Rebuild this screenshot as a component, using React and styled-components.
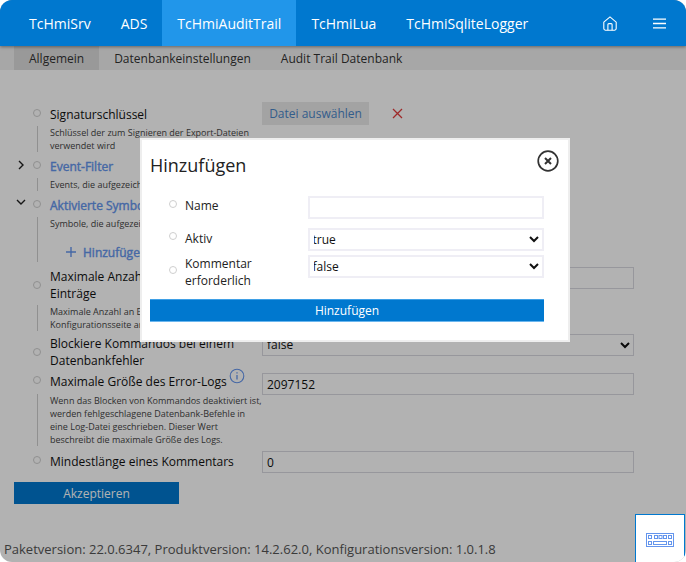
import React from "react";
import styled, { createGlobalStyle } from "styled-components";

const Global = createGlobalStyle`
  html, body { margin: 0; padding: 0; background: #fff; }
  body { font-family: "Open Sans", "Liberation Sans", sans-serif; }
  * { box-sizing: border-box; }
`;

const Frame = styled.div`
  position: relative;
  width: 686px;
  height: 562px;
  overflow: hidden;
  border-radius: 12px;
  background: #fff;
  display: flex;
  flex-direction: column;
`;

const TopBar = styled.header`
  position: relative;
  z-index: 3;
  flex: none;
  height: 46px;
  display: flex;
  align-items: stretch;
  padding-left: 14px;
  background: #0078cf;
  box-shadow: 0 1px 3px rgba(0, 0, 0, 0.4);
`;

const TopTab = styled.div`
  display: flex;
  align-items: center;
  padding: 0 15px;
  font-size: 14px;
  color: #fff;
  background: ${(p) => (p.$active ? "#2196ea" : "transparent")};
`;

const TopIcons = styled.div`
  margin-left: auto;
  display: flex;
  align-items: center;
  gap: 36px;
  padding-right: 20px;
`;

const SubTabs = styled.nav`
  flex: none;
  height: 24px;
  display: flex;
  padding-left: 14px;
  background: #f0f0f0;
`;

const SubTab = styled.div`
  display: flex;
  align-items: center;
  padding: 0 15px;
  font-size: 12px;
  color: #333;
  background: ${(p) => (p.$active ? "#dcdcdc" : "transparent")};
`;

const Settings = styled.main`
  flex: 1;
  display: flex;
  flex-direction: column;
  padding-top: 36px;
`;

const Row = styled.section`
  display: grid;
  grid-template-columns: 33px 17px 212px 372px;
  margin-top: ${(p) => p.$top || 0}px;
`;

const Twisty = styled.div`
  display: flex;
  justify-content: center;
  padding: ${(p) => p.$top || 0}px 0 0 9px;
`;

const Dot = styled.span`
  display: block;
  width: 8px;
  height: 8px;
  margin-top: ${(p) => p.$top || 3}px;
  border-radius: 50%;
  border: 1.5px solid #cfcfcf;
  background: #fff;
`;

const LabelColumn = styled.div`
  min-width: 0;
`;

const Label = styled.div`
  font-size: 12px;
  line-height: 17px;
  color: #111;
`;

const GroupLabel = styled.div`
  font-size: 12px;
  line-height: 17px;
  color: #6495ed;
  -webkit-text-stroke: 0.4px #6495ed;
  white-space: nowrap;
`;

const Note = styled.div`
  margin: ${(p) => p.$top || 3}px 0 0 -13px;
  padding-left: 12px;
  border-left: 1px solid #cfcfcf;
  font-size: 9px;
  line-height: 13px;
  color: #444;
  white-space: nowrap;
`;

const AddLine = styled.div`
  display: flex;
  align-items: center;
  gap: 6px;
  padding: 12px 0 0 15px;
  height: 32px;
  font-size: 12px;
  color: #6495ed;
  -webkit-text-stroke: 0.4px #6495ed;
`;

const FieldSlot = styled.div`
  margin-top: ${(p) => p.$top || 0}px;
`;

const FileButton = styled.div`
  width: 107px;
  height: 23px;
  display: flex;
  align-items: center;
  justify-content: center;
  font-size: 12px;
  color: #4a86c8;
  background: #eaeaea;
`;

const FileRow = styled.div`
  display: flex;
  align-items: center;
  gap: 23px;
`;

const TextField = styled.div`
  width: 372px;
  height: 22px;
  display: flex;
  align-items: center;
  padding-left: 4px;
  font-size: 12px;
  color: #111;
  border: 1px solid #d8d8e0;
`;

const SelectField = styled.select`
  width: ${(p) => p.$width || 372}px;
  height: ${(p) => p.$height || 22}px;
  padding-left: 0;
  font-family: inherit;
  font-size: 12px;
  color: #111;
  background: transparent;
  border: ${(p) => p.$border || "1px solid #d8d8e0"};
  border-radius: 0;
  outline: none;
`;

const AcceptButton = styled.div`
  width: 165px;
  height: 22px;
  margin: 9px 0 0 14px;
  display: flex;
  align-items: center;
  justify-content: center;
  font-size: 12px;
  color: #fff;
  background: #0078cf;
`;

const Footer = styled.footer`
  margin-top: auto;
  padding: 0 0 4px 4px;
  font-size: 13px;
  line-height: 18px;
  color: #555;
  white-space: nowrap;
`;

const Overlay = styled.div`
  position: absolute;
  z-index: 2;
  inset: 0;
  background: rgba(0, 0, 0, 0.3);
`;

const Dialog = styled.div`
  position: absolute;
  z-index: 4;
  left: 140px;
  top: 138px;
  width: 430px;
  height: 204px;
  padding: 10px 8px 0 8px;
  background: #fff;
  border: 2px solid #eeeeee;
`;

const DialogHead = styled.div`
  display: flex;
  justify-content: space-between;
  height: 46px;
`;

const DialogTitle = styled.h2`
  margin: 3px 0 0;
  font-size: 18px;
  line-height: 25px;
  font-weight: 400;
  color: #222;
`;

const DialogRow = styled.div`
  display: grid;
  grid-template-columns: 35px 123px 236px;
  height: ${(p) => p.$height}px;
`;

const DialogLabel = styled.div`
  font-size: 12px;
  line-height: 17px;
  padding-top: ${(p) => p.$top || 0}px;
  color: #222;
`;

const DialogDot = styled.span`
  display: block;
  width: 8px;
  height: 8px;
  margin: ${(p) => p.$top}px 0 0 19px;
  border-radius: 50%;
  border: 1.5px solid #cfcfcf;
`;

const DialogInput = styled.input`
  width: 236px;
  height: 23px;
  border: 2px solid #efeef5;
  outline: none;
  background: #fff;
`;

const DialogSelect = styled(SelectField)`
  text-indent: -1.5px;
`;

const DialogButton = styled.div`
  width: 394px;
  height: 23px;
  margin-top: 0;
  display: flex;
  align-items: center;
  justify-content: center;
  font-size: 12px;
  color: #fff;
  background: #0078cf;
  border-top: 1px solid #3fa0e6;
  border-bottom: 1px solid #6bb6ee;
`;

const KeyboardTab = styled.div`
  position: absolute;
  z-index: 3;
  right: 1px;
  bottom: 0;
  width: 50px;
  height: 48px;
  display: flex;
  align-items: center;
  justify-content: center;
  background: #fff;
  border: 1px solid #0078cf;
  border-bottom: 0;
  padding-top: 2px;
`;

const InfoBadge = styled.svg`
  position: absolute;
  left: 179px;
  top: -5px;
`;

const InfoLabel = styled.div`
  position: relative;
`;

const Chevron = ({ open }) => (
  <svg width="10" height="10" viewBox="0 0 10 10" fill="none" stroke="#222" strokeWidth="1.4">
    <path d={open ? "M1 3l4 4 4-4" : "M3 1l4 4-4 4"} />
  </svg>
);

const HomeIcon = () => (
  <svg width="14" height="15" viewBox="0 0 14 15" fill="none" stroke="#fff" strokeWidth="1.1">
    <path d="M0.8 6.2 L7 0.9 L13.2 6.2 V12.6 a1.6 1.6 0 0 1 -1.6 1.6 H2.4 a1.6 1.6 0 0 1 -1.6 -1.6 Z" />
    <path d="M4.9 14.2 V8.6 a1 1 0 0 1 1 -1 H8.1 a1 1 0 0 1 1 1 V14.2" />
  </svg>
);

const MenuIcon = () => (
  <svg width="13" height="11" viewBox="0 0 13 11" stroke="#fff" strokeWidth="1.3">
    <path d="M0 1.2H13M0 5.5H13M0 9.8H13" />
  </svg>
);

const CloseIcon = () => (
  <svg width="22" height="22" viewBox="0 0 22 22" fill="none" stroke="#333" style={{ marginRight: 1 }}>
    <circle cx="11" cy="11" r="9.8" strokeWidth="1.7" />
    <path d="M8 8l6 6M14 8l-6 6" strokeWidth="2" />
  </svg>
);

const RedCross = () => (
  <svg width="11" height="11" viewBox="0 0 11 11" stroke="#e23c3c" strokeWidth="1.3">
    <path d="M1 1l9 9M10 1l-9 9" />
  </svg>
);

const PlusIcon = () => (
  <svg width="12" height="12" viewBox="0 0 12 12" stroke="#6495ed" strokeWidth="1.4">
    <path d="M6 1v10M1 6h10" />
  </svg>
);

const InfoIcon = () => (
  <InfoBadge width="16" height="16" viewBox="0 0 16 16" fill="none" stroke="#6495ed" strokeWidth="1.1">
    <circle cx="8" cy="8" r="6.8" />
    <path d="M8 7v4.5M8 4.2v1.4" strokeWidth="1.3" />
  </InfoBadge>
);

const KeyboardIcon = () => (
  <svg width="28" height="14" viewBox="0 0 28 14" fill="none" stroke="#6495ed" strokeWidth="1">
    <rect x="0.5" y="0.5" width="27" height="13" />
    <rect x="2.5" y="2.5" width="3" height="3" />
    <rect x="8.5" y="2.5" width="3" height="3" />
    <rect x="13" y="2.5" width="3" height="3" />
    <rect x="17.5" y="2.5" width="3" height="3" />
    <rect x="22.5" y="2.5" width="3" height="3" />
    <rect x="2.5" y="8.5" width="3" height="3" />
    <rect x="7.5" y="8.5" width="13" height="3" />
    <rect x="22.5" y="8.5" width="3" height="3" />
  </svg>
);

export default function App() {
  return (
    <Frame>
      <Global />
      <TopBar>
        <TopTab>TcHmiSrv</TopTab>
        <TopTab>ADS</TopTab>
        <TopTab $active>TcHmiAuditTrail</TopTab>
        <TopTab>TcHmiLua</TopTab>
        <TopTab>TcHmiSqliteLogger</TopTab>
        <TopIcons>
          <HomeIcon />
          <MenuIcon />
        </TopIcons>
      </TopBar>
      <SubTabs>
        <SubTab $active>Allgemein</SubTab>
        <SubTab>Datenbankeinstellungen</SubTab>
        <SubTab>Audit Trail Datenbank</SubTab>
      </SubTabs>
      <Settings>
        <Row>
          <span />
          <Dot />
          <LabelColumn>
            <Label>Signaturschlüssel</Label>
            <Note>Schlüssel der zum Signieren der Export-Dateien<br />verwendet wird</Note>
          </LabelColumn>
          <FieldSlot $top={-4}>
            <FileRow>
              <FileButton>Datei auswählen</FileButton>
              <RedCross />
            </FileRow>
          </FieldSlot>
        </Row>
        <Row $top={6}>
          <Twisty $top={2}><Chevron /></Twisty>
          <Dot />
          <LabelColumn>
            <GroupLabel>Event-Filter</GroupLabel>
            <Note>Events, die aufgezeichnet werden</Note>
          </LabelColumn>
        </Row>
        <Row $top={6}>
          <Twisty><Chevron open /></Twisty>
          <Dot />
          <LabelColumn>
            <GroupLabel>Aktivierte Symbole</GroupLabel>
            <Note>
              Symbole, die aufgezeichnet werden
              <AddLine><PlusIcon />Hinzufügen</AddLine>
            </Note>
          </LabelColumn>
        </Row>
        <Row $top={6}>
          <span />
          <Dot $top={13} />
          <LabelColumn>
            <Label>Maximale Anzahl der Datenbank Einträge</Label>
            <Note>Maximale Anzahl an Einträgen, die auf der<br />Konfigurationsseite angezeigt werden</Note>
          </LabelColumn>
          <FieldSlot $top={-1}><TextField /></FieldSlot>
        </Row>
        <Row $top={4}>
          <span />
          <Dot $top={13} />
          <LabelColumn>
            <Label>Blockiere Kommandos bei einem Datenbankfehler</Label>
          </LabelColumn>
          <FieldSlot $top={-3}><SelectField defaultValue="false"><option>false</option><option>true</option></SelectField></FieldSlot>
        </Row>
        <Row $top={4}>
          <span />
          <Dot />
          <LabelColumn>
            <InfoLabel>
              <Label>Maximale Größe des Error-Logs</Label>
              <InfoIcon />
            </InfoLabel>
            <Note $top={4}>
              Wenn das Blocken von Kommandos deaktiviert ist,<br />
              werden fehlgeschlagene Datenbank-Befehle in<br />
              eine Log-Datei geschrieben. Dieser Wert<br />
              beschreibt die maximale Größe des Logs.
            </Note>
          </LabelColumn>
          <FieldSlot $top={0}><TextField>2097152</TextField></FieldSlot>
        </Row>
        <Row $top={7}>
          <span />
          <Dot />
          <LabelColumn>
            <Label>Mindestlänge eines Kommentars</Label>
          </LabelColumn>
          <FieldSlot $top={-2}><TextField>0</TextField></FieldSlot>
        </Row>
        <AcceptButton>Akzeptieren</AcceptButton>
        <Footer>Paketversion: 22.0.6347, Produktversion: 14.2.62.0, Konfigurationsversion: 1.0.1.8</Footer>
      </Settings>
      <Overlay />
      <Dialog>
        <DialogHead>
          <DialogTitle>Hinzufügen</DialogTitle>
          <CloseIcon />
        </DialogHead>
        <DialogRow $height={32}>
          <DialogDot $top={4} />
          <DialogLabel $top={1}>Name</DialogLabel>
          <DialogInput />
        </DialogRow>
        <DialogRow $height={27}>
          <DialogDot $top={4} />
          <DialogLabel $top={2}>Aktiv</DialogLabel>
          <DialogSelect $width={236} $height={23} $border="2px solid #efeef5" defaultValue="true"><option>true</option><option>false</option></DialogSelect>
        </DialogRow>
        <DialogRow $height={44}>
          <DialogDot $top={11} />
          <DialogLabel>Kommentar<br />erforderlich</DialogLabel>
          <DialogSelect $width={236} $height={23} $border="2px solid #efeef5" defaultValue="false"><option>false</option><option>true</option></DialogSelect>
        </DialogRow>
        <DialogButton>Hinzufügen</DialogButton>
      </Dialog>
      <KeyboardTab><KeyboardIcon /></KeyboardTab>
    </Frame>
  );
}
